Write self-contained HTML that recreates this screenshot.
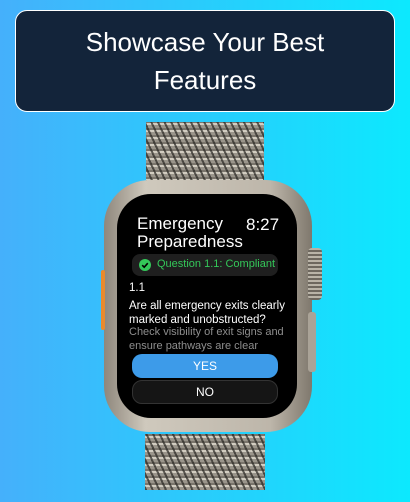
<!DOCTYPE html>
<html><head><style>
*{margin:0;padding:0;box-sizing:border-box}
body{width:410px;height:502px;overflow:hidden;background:linear-gradient(90deg,#45b0fb,#0ce9fe);font-family:"Liberation Sans",sans-serif;position:relative}
.hdr{position:absolute;left:15px;top:10px;width:380px;height:102px;background:#13243a;border:1.5px solid #fff;border-radius:12px;color:#fff;font-size:26px;text-align:center;line-height:38px;padding-top:12px}
.band{position:absolute;background:
repeating-linear-gradient(65deg,rgba(40,38,34,.7) 0 2px,transparent 2px 6px),
repeating-linear-gradient(0deg,#9a958b 0 3px,#d2cdc1 3px 5px,#7a756c 5px 7px);}
.case{position:absolute;left:104px;top:180px;width:208px;height:252px;border-radius:46px;background:linear-gradient(90deg,#8e877c,#cfc9bd 20%,#bdb6aa 80%,#7f786d);}
.screen{position:absolute;left:117px;top:194px;width:180px;height:224px;border-radius:34px;background:#000;color:#fff}
.crown{position:absolute;left:308px;top:248px;width:14px;height:52px;border-radius:4px;background:repeating-linear-gradient(0deg,#6d675e 0 2px,#b9b3a7 2px 4px)}
.btn2{position:absolute;left:308px;top:312px;width:8px;height:60px;border-radius:3px;background:#aaa397}
.t{position:absolute;white-space:nowrap}
</style></head><body>
<div class="hdr">Showcase Your Best<br>Features</div>
<div class="band" style="left:146px;top:122px;width:118px;height:62px"></div>
<div class="band" style="left:145px;top:434px;width:120px;height:56px"></div>
<div class="case"></div>
<div class="crown"></div>
<div class="btn2"></div>
<div style="position:absolute;left:101px;top:270px;width:4px;height:60px;background:#e98a2c;border-radius:2px"></div>
<div class="screen">
<div class="t" style="left:20px;top:21px;font-size:17px;line-height:18px">Emergency<br>Preparedness</div>
<div class="t" style="left:129px;top:21px;font-size:17px">8:27</div>
<div style="position:absolute;left:15px;top:60px;width:146px;height:22px;background:#1f1f1f;border-radius:8px"></div>
<div style="position:absolute;left:22px;top:65px;width:12px;height:12px;border-radius:50%;background:#34c759"></div>
<svg style="position:absolute;left:22px;top:65px" width="12" height="12"><path d="M3.2 6.2l2 2 3.6-4" stroke="#000" stroke-width="1.6" fill="none"/></svg>
<div class="t" style="left:40px;top:64px;font-size:11px;color:#34c759">Question 1.1: Compliant</div>
<div class="t" style="left:12px;top:88px;font-size:11.5px">1.1</div>
<div class="t" style="left:12px;top:105px;font-size:11.5px;line-height:14px">Are all emergency exits clearly<br>marked and unobstructed?</div>
<div class="t" style="left:12px;top:131px;font-size:11px;line-height:14px;color:#8e8e8e">Check visibility of exit signs and<br>ensure pathways are clear</div>
<div style="position:absolute;left:15px;top:160px;width:146px;height:24px;background:#3d9be9;border-radius:10px;font-size:12px;text-align:center;line-height:24px">YES</div>
<div style="position:absolute;left:15px;top:186px;width:146px;height:24px;background:#151515;border:1px solid #333;border-radius:10px;font-size:12px;text-align:center;line-height:22px">NO</div>
</div>
</body></html>
